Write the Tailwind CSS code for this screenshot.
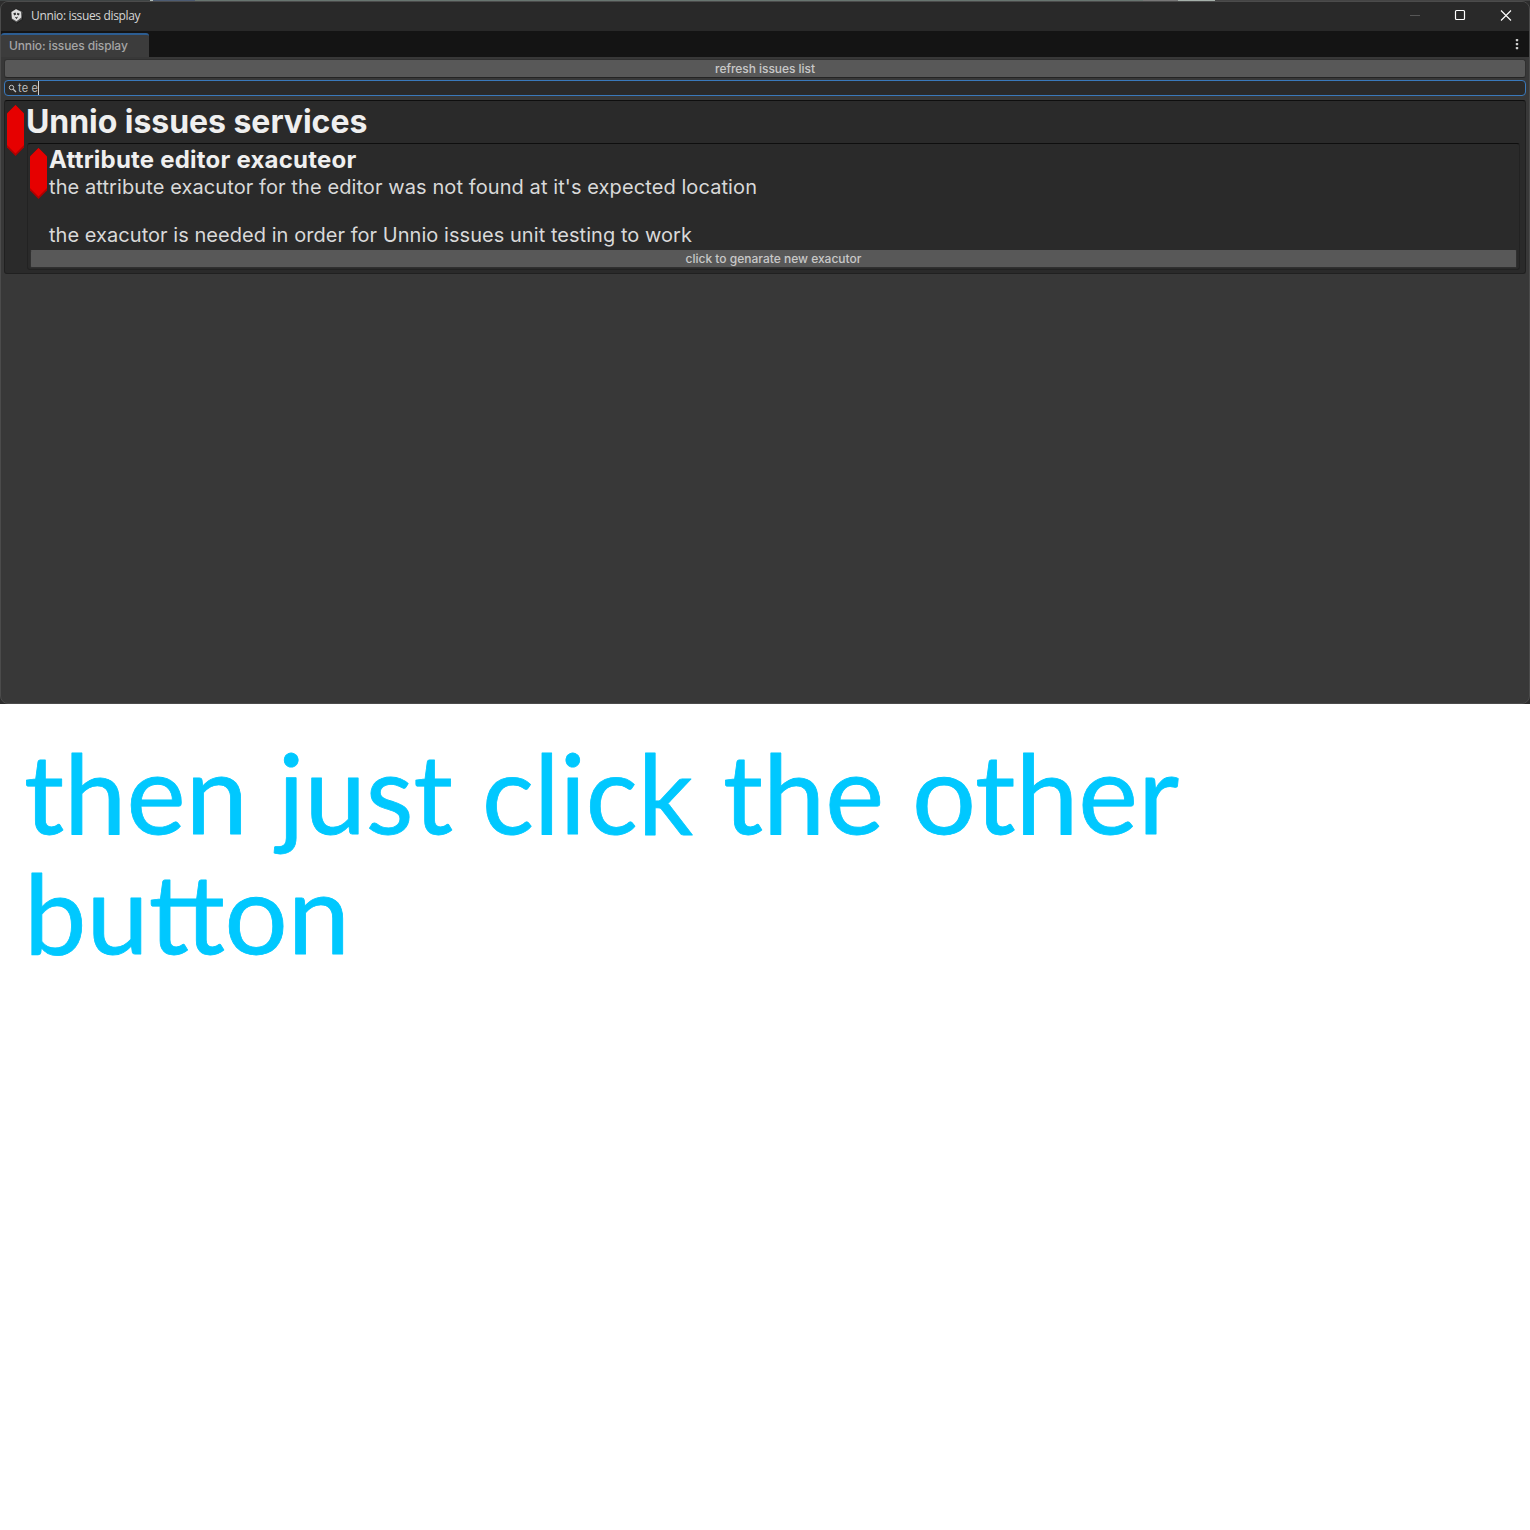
<!DOCTYPE html>
<html lang="en">
<head>
<meta charset="utf-8">
<title>Unnio: issues display</title>
<script src="https://cdn.jsdelivr.net/npm/@tailwindcss/browser@4"></script>
</head>
<body class="bg-white w-[1530px] h-[1530px] overflow-hidden font-['Inter',sans-serif]">
<div class="h-[704px] bg-[#2d2d2d] relative">
  <!-- desktop showing above the window edge -->
  <div class="absolute inset-x-0 top-0 h-px flex">
    <div class="w-[150px] bg-[#3f4444]"></div><div class="w-[3px] bg-[#b0bcb8]"></div><div class="w-[42px] bg-[#4d5c73]"></div><div class="w-[948px] bg-[#687570]"></div><div class="w-[35px] bg-[#777]"></div><div class="w-[37px] bg-[#a5b0aa]"></div><div class="flex-1 bg-[#444]"></div>
  </div>
  <div class="absolute inset-x-0 top-px bottom-0 rounded-lg border border-[#4b4b4b] bg-[#383838] overflow-hidden flex flex-col">
    <header class="h-[29px] shrink-0 bg-[#292929] flex items-center pl-2 pb-[2px]">
      <svg class="w-4 h-4 shrink-0" viewBox="0 0 16 16">
        <path d="M7.500 0.500L14.300 3.500L13.500 11.500L8 15.500L2.500 12L1.500 3.500Z" fill="#151515"/>
        <path d="M7 .8L13 3.200L13.800 4L12.800 11.500L7.500 14.800L2.300 11.300L1.800 4Z" fill="#505050"/>
        <path d="M7 1.300L12 3.800L12.300 9.500L7.500 13.300L3 10.500L2.500 4Z" fill="#dedede"/>
        <path d="M4.300 5.200L6.500 4.600L7.200 6.500L5.200 7.600ZM8.400 4.800L10.800 5.700L9.600 7.600L7.900 6.500ZM5.700 8.700L7.400 9.300L9.200 8.600L7.500 11.200Z" fill="#303030"/>
      </svg>
      <span class="ml-[6px] mt-px text-[12px] leading-4 text-[#d6d6d6] font-['Open_Sans',sans-serif] whitespace-nowrap tracking-[-0.35px]">Unnio: issues display</span>
      <svg class="ml-auto w-[120px] h-[27px] shrink-0" viewBox="0 0 120 27" fill="none">
        <path d="M1 13.500H11" stroke="#565656"/>
        <rect x="46.500" y="8.500" width="9" height="9" rx="1" stroke="#fff" stroke-width="1.200"/>
        <path d="M92 8.500L102 18.500M102 8.500L92 18.500" stroke="#fff" stroke-width="1.100"/>
      </svg>
    </header>
    <div class="h-[26px] shrink-0 bg-[#141414] flex">
      <div class="mt-[2px] w-[148px] h-[24px] bg-[#3c3c3c] border-t-2 border-[#2c5d92] rounded-t-[3px] pl-2 text-[12px] leading-[22px] font-medium text-[#a5a5a5] whitespace-nowrap tracking-[-0.12px]">Unnio: issues display</div>
      <svg class="ml-auto mr-[10px] mt-[7px] w-[4px] h-3" viewBox="0 0 4 12" fill="#cfcfcf"><rect x=".8" y="1" width="2.400" height="2.200" rx=".5"/><rect x=".8" y="5" width="2.400" height="2.200" rx=".5"/><rect x=".8" y="9" width="2.400" height="2.200" rx=".5"/></svg>
    </div>
    <main class="px-[3px] pt-[2px]">
      <button class="w-full h-[19px] block rounded-[3px] border border-[#303030] border-b-[#242424] bg-[#585858] text-[12px] leading-[18px] font-medium text-[#c8c8c8] tracking-[-0.05px]">refresh issues list</button>
      <div class="mt-[2px] w-full h-[16px] rounded-[4px] border border-[#3a79bb] bg-[#2a2a2a] flex items-center pl-[3px]">
        <svg class="w-[9px] h-[9px]" viewBox="0 0 9 9" fill="none" stroke="#c4c4c4"><circle cx="3.500" cy="3.500" r="2.200"/><path d="M5.200 5.200L8 8" stroke-width="1.300"/></svg>
        <span class="ml-px text-[11px] leading-[14px] text-[#bdbdbd] border-r border-[#d0d0d0] tracking-[0.2px]">te e</span>
      </div>
      <section class="mt-[4px] h-[174px] border border-[#202020] border-t-[#0e0e0e] rounded-[3px] bg-[#2a2a2a] flex pl-[2px]">
        <svg class="w-[17px] h-[51px] mt-1 shrink-0" viewBox="0 0 17 51"><path d="M8.500 0L17 8.500V42.500L8.500 51L0 42.500V8.500Z" fill="#b00000"/><path d="M8.500 0L17 8.500V40L8.500 48.500L0 40V8.500Z" fill="#e60000"/></svg>
        <div class="flex-1 pl-[3px] pr-[5px]">
          <h1 class="h-[42px] -ml-px text-[32px] leading-[42px] font-bold text-[#efefef] whitespace-nowrap tracking-[-0.05px]">Unnio issues services</h1>
          <div class="h-[127px] border border-[#222] border-t-[#0e0e0e] rounded-[3px] bg-[#2a2a2a]">
            <div class="flex h-[106px] pl-[2px]">
              <svg class="w-[17px] h-[51px] mt-1 shrink-0" viewBox="0 0 17 51"><path d="M8.500 0L17 8.500V42.500L8.500 51L0 42.500V8.500Z" fill="#b00000"/><path d="M8.500 0L17 8.500V40L8.500 48.500L0 40V8.500Z" fill="#e60000"/></svg>
              <div class="pl-[2px] whitespace-nowrap">
                <h2 class="text-[24px] leading-[32px] font-bold text-[#efefef] tracking-[0.22px]">Attribute editor exacuteor</h2>
                <p class="-mt-px text-[20px] leading-[24px] text-[#d9d9d9] tracking-[0.09px]">the attribute exacutor for the editor was not found at it's expected location<br><br><span class="tracking-[0.045px]">the exacutor is needed in order for Unnio issues unit testing to work</span></p>
              </div>
            </div>
            <button class="block ml-[2px] w-[1487px] h-[18px] rounded-[2px] border border-[#303030] border-t-[#585858] bg-[#585858] text-[12px] leading-[16px] font-medium text-[#c8c8c8]">click to genarate new exacutor</button>
          </div>
        </div>
      </section>
    </main>
  </div>
</div>
<svg class="block w-[1530px] h-[826px] font-['Lato',sans-serif]" viewBox="0 704 1530 826" fill="#00c8ff" stroke="#00c8ff" stroke-width=".8" stroke-linejoin="round" font-size="110.500">
  <text x="24" y="834" textLength="224" lengthAdjust="spacingAndGlyphs">then</text>
  <text x="278" y="834" textLength="175" lengthAdjust="spacingAndGlyphs">just</text>
  <text x="482" y="834" textLength="211" lengthAdjust="spacingAndGlyphs">click</text>
  <text x="723" y="834" textLength="161" lengthAdjust="spacingAndGlyphs">the</text>
  <text x="912" y="834" textLength="267" lengthAdjust="spacingAndGlyphs">other</text>
  <text x="24" y="954" textLength="326" lengthAdjust="spacingAndGlyphs">button</text>
</svg>
</body>
</html>
